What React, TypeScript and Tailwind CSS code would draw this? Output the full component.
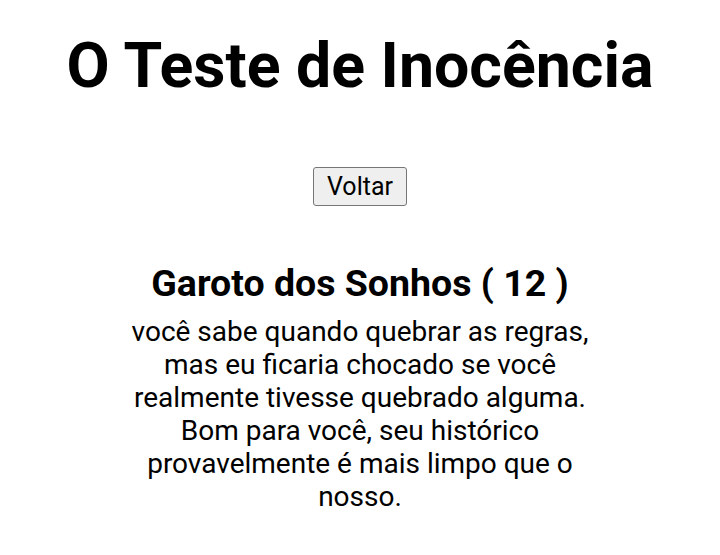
export default function App() {
  return (
    <div className="flex flex-col items-center bg-white text-black font-['Roboto',sans-serif]">
      <h1 className="mt-[29px] text-[62.6px] font-bold leading-[74px]">O Teste de Inocência</h1>
      <button className="mt-[64px] rounded-[3px] border border-[#767676] bg-[#efefef] px-[13px] py-px text-[25px] leading-[35px]">
        Voltar
      </button>
      <div className="mt-[55px] flex w-[480px] flex-col items-center text-center">
        <h2 className="text-[37.5px] font-bold leading-[44px]">Garoto dos Sonhos ( 12 )</h2>
        <p className="mt-[10px] text-[28px] leading-[33px]">
          você sabe quando quebrar as regras, mas eu ficaria chocado se você realmente tivesse quebrado alguma. Bom para você, seu histórico provavelmente é mais limpo que o nosso.
        </p>
      </div>
    </div>
  )
}
